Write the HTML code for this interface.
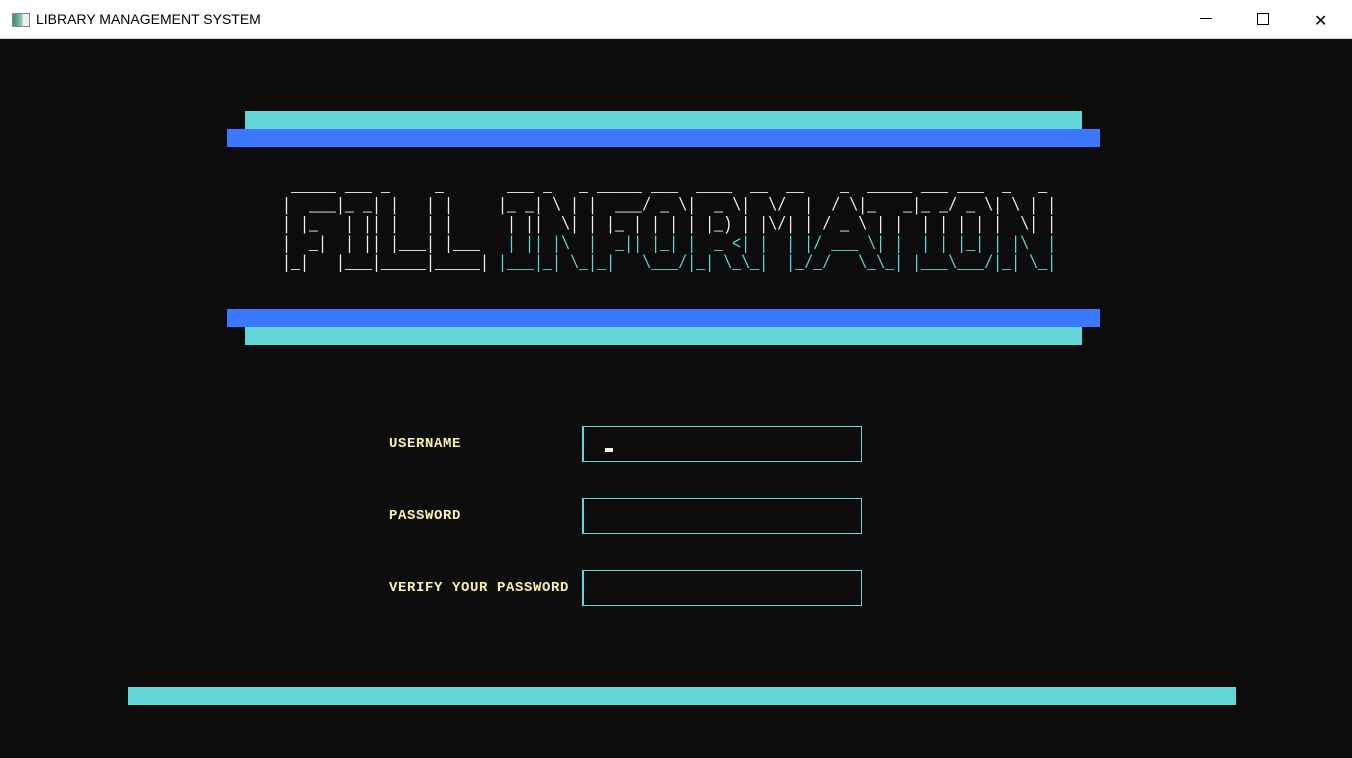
<!DOCTYPE html>
<html><head><meta charset="utf-8"><style>
body{margin:0;width:1352px;height:758px;background:#0c0c0c;position:relative;overflow:hidden;font-family:"Liberation Mono",monospace}
.tb{position:absolute;left:0;top:0;width:1352px;height:38px;background:#fff;border-bottom:1px solid #ddd}
.tb .t{position:absolute;left:36px;top:11px;font:14px "Liberation Sans",sans-serif;color:#000}
.ic{position:absolute;left:12px;top:13px;width:16px;height:12px;border:1px solid #888;background:linear-gradient(90deg,#3a8a6a,#9cc 60%,#eee 60%)}
.b{position:absolute}
.art{position:absolute;left:282px;top:178px;margin:0;font:15px/16px "Liberation Mono",monospace;color:#f2f2f2;white-space:pre;transform:scaleY(1.2);transform-origin:0 0}
.c{color:#61d6d6}
.l{position:absolute;left:389px;color:#f9f1a5;font-weight:bold;font-size:14px;letter-spacing:0.6px}
.in{position:absolute;left:582px;width:277px;height:34px;border:1px solid #61d6d6;border-left:2px solid #61d6d6}
</style></head><body>
<div class="tb"><div class="ic"></div><div class="t">LIBRARY MANAGEMENT SYSTEM</div>
<div style="position:absolute;left:1200px;top:18px;width:12px;height:1px;background:#000"></div>
<div style="position:absolute;left:1257px;top:13px;width:10px;height:10px;border:1px solid #000"></div>
<div style="position:absolute;left:1314px;top:11px;font:16px 'DejaVu Sans';color:#000">✕</div>
</div>
<div class="b" style="left:245px;top:111px;width:837px;height:18px;background:#61d6d6"></div>
<div class="b" style="left:227px;top:129px;width:873px;height:18px;background:#3b78ff"></div>
<pre class="art"> _____ ___ _     _       ___ _   _ _____ ___  ____  __  __    _  _____ ___ ___  _   _ 
|  ___|_ _| |   | |     |_ _| \ | |  ___/ _ \|  _ \|  \/  |  / \|_   _|_ _/ _ \| \ | |
| |_   | || |   | |      | ||  \| | |_ | | | | |_) | |\/| | / _ \ | |  | | | | |  \| |
|  _|  | || |___| |___  <span class="c"> | || |\  |  _|| |_| |  _ &lt;| |  | |/ ___ \| |  | | |_| | |\  |</span>
|_|   |___|_____|_____| <span class="c">|___|_| \_|_|   \___/|_| \_\_|  |_/_/   \_\_| |___\___/|_| \_|</span></pre>
<div class="b" style="left:227px;top:309px;width:873px;height:18px;background:#3b78ff"></div>
<div class="b" style="left:245px;top:327px;width:837px;height:18px;background:#61d6d6"></div>
<div class="l" style="top:436px">USERNAME</div>
<div class="l" style="top:508px">PASSWORD</div>
<div class="l" style="top:580px">VERIFY YOUR PASSWORD</div>
<div class="in" style="top:426px"></div>
<div class="b" style="left:605px;top:448px;width:8px;height:4px;background:#f2f2f2"></div>
<div class="in" style="top:498px"></div>
<div class="in" style="top:570px"></div>
<div class="b" style="left:128px;top:687px;width:1108px;height:18px;background:#61d6d6"></div>
</body></html>
